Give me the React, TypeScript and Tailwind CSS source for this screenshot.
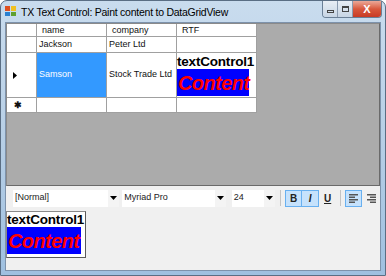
import React from 'react';

const font = { fontFamily: '"Liberation Sans", Arial, sans-serif' };

const RtfContent = ({ small }: { small?: boolean }) => (
  <div className="flex flex-col items-start">
    <div className="text-[13.5px] font-bold leading-[15px] text-black tracking-[-0.2px] whitespace-nowrap">textControl1</div>
    <div className={`bg-[#0000ff] h-[27px] flex items-center pl-[1px] ${small ? 'w-[74px]' : 'w-[72px]'}`}>
      <span className="text-[20px] font-bold italic text-[#ff0000] leading-none tracking-[-0.6px]">Content</span>
    </div>
  </div>
);

const Arrow = () => (
  <svg width="7" height="4" viewBox="0 0 7 4"><path d="M0 0h7L3.5 4z" fill="#000" /></svg>
);

const Combo = ({ text, w }: { text: string; w: string }) => (
  <div className={`flex h-[17px] bg-white items-center ${w}`}>
    <span className="flex-1 pl-[2px] text-[9px] text-[#222]">{text}</span>
    <div className="w-[11px] h-full flex items-center justify-center bg-[#f4f4f4]"><Arrow /></div>
  </div>
);

export default function App() {
  return (
    <div style={font} className="w-[386px] h-[276px] rounded-t-[7px] bg-gradient-to-b from-[#c9dcee] via-[#b7cfe6] to-[#9fc0e0] flex flex-col border border-[#5a6e84]">
      {/* title bar */}
      <div className="h-[21px] flex items-start relative">
        <div className="mt-[5px] ml-[4px] w-[11px] h-[10px] grid grid-cols-2 gap-[1px]">
          <div className="bg-[#e05020]" /><div className="bg-[#f0c020]" />
          <div className="bg-[#2a80d0]" /><div className="bg-[#60a030]" />
        </div>
        <span className="ml-[5px] mt-[4px] text-[10.5px] text-black tracking-[-0.25px] whitespace-nowrap">TX Text Control: Paint content to DataGridView</span>
        <div className="absolute right-[3px] top-0 flex h-[17px] rounded-b-[4px] overflow-hidden border border-t-0 border-[#6a7f96]">
          <div className="w-[15px] bg-gradient-to-b from-[#e8eef5] to-[#c7d5e4] flex items-center justify-center border-r border-[#8a9bb0]">
            <div className="w-[7px] h-[3px] border border-[#444] mt-[4px]" />
          </div>
          <div className="w-[15px] bg-gradient-to-b from-[#e8eef5] to-[#c7d5e4] flex items-center justify-center border-r border-[#8a9bb0]">
            <div className="w-[7px] h-[6px] border border-[#444] border-t-2" />
          </div>
          <div className="w-[28px] bg-gradient-to-b from-[#eaa898] via-[#d8583c] to-[#c83a24] flex items-center justify-center text-white text-[11px] font-bold">X</div>
        </div>
      </div>
      {/* client */}
      <div className="flex-1 mx-[4px] mb-[4px] bg-[#f0f0f0] border border-[#7d92ab] flex flex-col">
        <div className="h-[163px] bg-[#ababab] border border-[#6a6a6a] border-t-[#8a8a8a] border-l-[#8a8a8a]">
          <div className="grid grid-cols-[30px_70px_70px_80px] w-[250px] text-[9px] text-[#111] bg-white whitespace-nowrap">
            <div className="h-[13px] border-r border-b border-[#a0a0a0]" />
            <div className="h-[13px] border-r border-b border-[#a0a0a0] pl-[5px] leading-[12px]">name</div>
            <div className="h-[13px] border-r border-b border-[#a0a0a0] pl-[5px] leading-[12px]">company</div>
            <div className="h-[13px] border-r border-b border-[#a0a0a0] pl-[5px] leading-[12px]">RTF</div>

            <div className="h-[16px] border-r border-b border-[#a0a0a0]" />
            <div className="h-[16px] border-r border-b border-[#a0a0a0] pl-[2px] leading-[15px]">Jackson</div>
            <div className="h-[16px] border-r border-b border-[#a0a0a0] pl-[2px] leading-[15px]">Peter Ltd</div>
            <div className="h-[16px] border-r border-b border-[#a0a0a0]" />

            <div className="h-[45px] border-r border-b border-[#a0a0a0] flex items-center pl-[6px]">
              <svg width="4" height="7" viewBox="0 0 4 7"><path d="M0 0l4 3.5L0 7z" fill="#000" /></svg>
            </div>
            <div className="h-[45px] border-r border-b border-[#a0a0a0] bg-[#3399ff] text-white flex items-center pl-[2px]">Samson</div>
            <div className="h-[45px] border-r border-b border-[#a0a0a0] flex items-center pl-[2px]">Stock Trade Ltd</div>
            <div className="h-[45px] border-r border-b border-[#a0a0a0] pt-[1px]"><RtfContent /></div>

            <div className="h-[15px] border-r border-b border-[#a0a0a0] flex items-center pl-[7px] text-[9px] font-bold leading-none">✱</div>
            <div className="h-[15px] border-r border-b border-[#a0a0a0]" />
            <div className="h-[15px] border-r border-b border-[#a0a0a0]" />
            <div className="h-[15px] border-r border-b border-[#a0a0a0]" />
          </div>
        </div>
        {/* toolbar */}
        <div className="h-[24px] flex items-center pl-[7px] gap-[2px]">
          <Combo text="[Normal]" w="w-[110px]" />
          <Combo text="Myriad Pro" w="w-[107px] ml-[1px]" />
          <Combo text="24" w="w-[45px] ml-[4px]" />
          <div className="w-[1px] h-[16px] bg-[#c4c4c4] ml-[3px] mr-[2px]" />
          <div className="flex">
            <div className="w-[17px] h-[17px] bg-[#c6e2fc] border border-[#68b0f0] flex items-center justify-center text-[10px] font-bold text-[#222]">B</div>
            <div className="w-[17px] h-[17px] bg-[#c6e2fc] border border-l-0 border-[#68b0f0] flex items-center justify-center text-[10px] font-bold italic text-[#222]">I</div>
            <div className="w-[17px] h-[17px] flex items-center justify-center text-[10px] font-bold underline text-[#222]">U</div>
          </div>
          <div className="w-[1px] h-[16px] bg-[#c4c4c4] mx-[2px]" />
          <div className="w-[17px] h-[17px] bg-[#c6e2fc] border border-[#68b0f0] flex items-center justify-center">
            <svg width="9" height="9" viewBox="0 0 9 9" fill="#555"><rect x="0" y="0" width="9" height="1.5" /><rect x="0" y="2.5" width="6" height="1.5" /><rect x="0" y="5" width="9" height="1.5" /><rect x="0" y="7.5" width="6" height="1.5" /></svg>
          </div>
          <div className="w-[17px] h-[17px] flex items-center justify-center">
            <svg width="9" height="9" viewBox="0 0 9 9" fill="#555"><rect x="0" y="0" width="9" height="1.5" /><rect x="3" y="2.5" width="6" height="1.5" /><rect x="0" y="5" width="9" height="1.5" /><rect x="3" y="7.5" width="6" height="1.5" /></svg>
          </div>
        </div>
        {/* text control */}
        <div className="flex">
          <div className="mt-[1px] border border-[#8a8a8a] border-r-[#5a5a5a] border-b-[#5a5a5a] bg-white w-[80px] h-[47px] overflow-hidden">
            <RtfContent small />
          </div>
        </div>
      </div>
    </div>
  );
}
